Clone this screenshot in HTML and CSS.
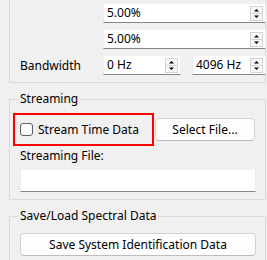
FILE: index.html
```html
<!DOCTYPE html>
<html lang="en">
  <head>
    <meta charset="UTF-8" />
    <meta name="viewport" content="width=device-width, initial-scale=1.0" />
    <title>Spectral Settings</title>
    <link rel="stylesheet" href="styles.css">
  </head>
  <body>
    <div class="panel">
      <div class="group top">
        <div class="grid">
          <span></span>
          <div class="spin wide">
            <span class="value">5.00%</span>
            <svg class="arrows" width="13" height="15" viewBox="0 0 13 15">
              <rect x="0.5" y="0.5" width="12" height="14" fill="#f7f7f7" stroke="#d4d4d4" />
              <line x1="1" y1="7.5" x2="12" y2="7.5" stroke="#d4d4d4" />
              <polygon points="4,5.5 9,5.5 6.5,3" fill="#000" />
              <polygon points="4,9.5 9,9.5 6.5,12" fill="#000" />
            </svg>
          </div>

          <span></span>
          <div class="spin wide">
            <span class="value">5.00%</span>
            <svg class="arrows" width="13" height="15" viewBox="0 0 13 15">
              <rect x="0.5" y="0.5" width="12" height="14" fill="#f7f7f7" stroke="#d4d4d4" />
              <line x1="1" y1="7.5" x2="12" y2="7.5" stroke="#d4d4d4" />
              <polygon points="4,5.5 9,5.5 6.5,3" fill="#000" />
              <polygon points="4,9.5 9,9.5 6.5,12" fill="#000" />
            </svg>
          </div>

          <span class="label">Bandwidth</span>
          <div class="spin">
            <span class="value">0 Hz</span>
            <svg class="arrows" width="13" height="15" viewBox="0 0 13 15">
              <rect x="0.5" y="0.5" width="12" height="14" fill="#f7f7f7" stroke="#d4d4d4" />
              <line x1="1" y1="7.5" x2="12" y2="7.5" stroke="#d4d4d4" />
              <polygon points="4,5.5 9,5.5 6.5,3" fill="#000" />
              <polygon points="4,9.5 9,9.5 6.5,12" fill="#000" />
            </svg>
          </div>
          <div class="spin">
            <span class="value">4096 Hz</span>
            <svg class="arrows" width="13" height="15" viewBox="0 0 13 15">
              <rect x="0.5" y="0.5" width="12" height="14" fill="#f7f7f7" stroke="#d4d4d4" />
              <line x1="1" y1="7.5" x2="12" y2="7.5" stroke="#d4d4d4" />
              <polygon points="4,5.5 9,5.5 6.5,3" fill="#000" />
              <polygon points="4,9.5 9,9.5 6.5,12" fill="#000" />
            </svg>
          </div>
        </div>
      </div>

      <fieldset class="group">
        <legend class="caption">Streaming</legend>
        <div class="stream-row">
          <label class="check-wrap">
            <span class="checkbox"></span>
            <span>Stream Time Data</span>
          </label>
          <button class="button select">Select File...</button>
        </div>
        <div class="field-label">Streaming File:</div>
        <div class="text-field"></div>
      </fieldset>

      <fieldset class="group">
        <legend class="caption">Save/Load Spectral Data</legend>
        <button class="button full">Save System Identification Data</button>
      </fieldset>
    </div>
  </body>
</html>
```

FILE: styles.css
```css
html,
body {
  margin: 0;
  background: #f0f0f0;
  overflow: hidden;
}
body {
  font-family: "Noto Sans", "Open Sans", sans-serif;
  font-size: 12px;
  line-height: 16px;
  color: #000;
}
.panel {
  padding-left: 9px;
  width: 257px;
  display: flex;
  flex-direction: column;
}
.group {
  margin: 0;
  border: 1px solid #dadada;
  padding: 6px 9px 7px 10px;
  min-width: 0;
}
.group + .group {
  margin-top: 8px;
}
.top {
  border-top: none;
  padding-top: 4px;
  padding-bottom: 7px;
}
.grid {
  display: grid;
  grid-template-columns: 72px 78px 74px;
  column-gap: 11px;
  row-gap: 7px;
  align-items: center;
}
.spin {
  height: 18px;
  background: #fff;
  border: 1px solid #ececec;
  border-bottom-color: #868686;
  border-top: none;
  display: flex;
  align-items: center;
  padding: 0 2px 0 3px;
}
.spin.wide {
  grid-column: 2 / 4;
}
.value {
  flex: 1;
}
.arrows {
  display: block;
}
.caption {
  padding: 0 2px;
  margin-left: -2px;
}
.stream-row {
  display: flex;
  align-items: center;
  gap: 1px;
}
.check-wrap {
  margin-left: -7px;
  height: 29px;
  width: 132px;
  border: 2px solid #ff0000;
  display: flex;
  align-items: center;
  padding-left: 5px;
  gap: 5px;
}
.checkbox {
  width: 11px;
  height: 11px;
  border: 1px solid #5c5c5c;
  border-radius: 3px;
  background: #fbfbfb;
}
.button {
  font: inherit;
  color: #000;
  background: #fdfdfd;
  border: 1px solid #d3d3d3;
  border-bottom-color: #bdbdbd;
  border-radius: 4px;
  height: 23px;
  padding: 0;
  text-align: center;
}
.select {
  width: 100px;
}
.full {
  width: 100%;
  margin-top: 3px;
}
.field-label {
  margin-top: 2px;
}
.text-field {
  margin-top: 6px;
  height: 21px;
  background: #fff;
  border: 1px solid #ececec;
  border-top: none;
  border-bottom-color: #868686;
}
```
